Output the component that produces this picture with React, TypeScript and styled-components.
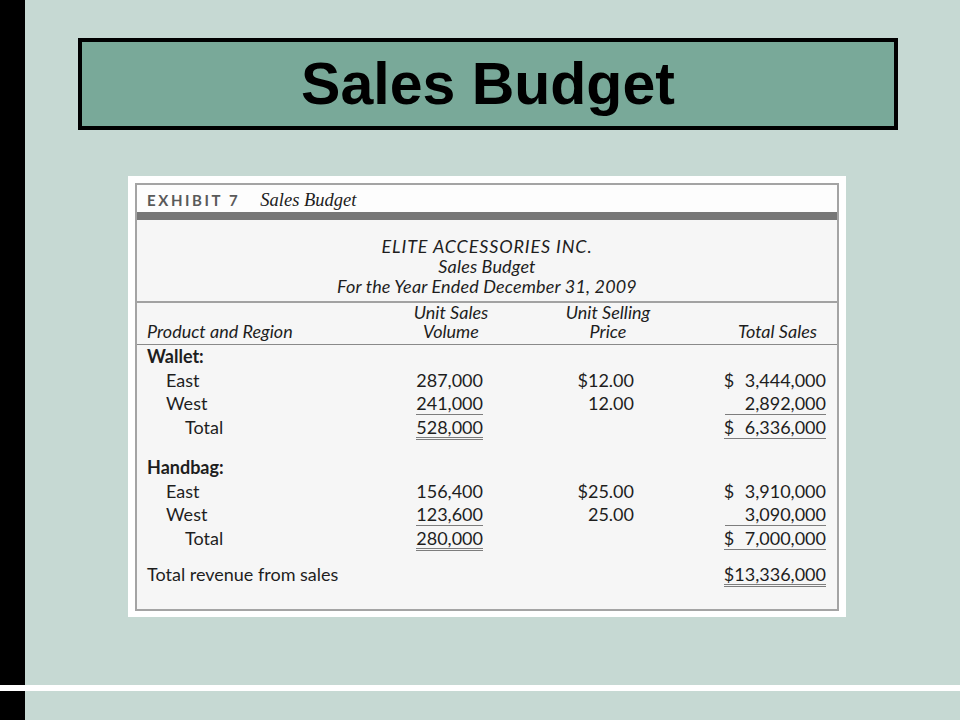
import styled, { createGlobalStyle } from 'styled-components';

const GlobalStyle = createGlobalStyle`
  html, body {
    margin: 0;
    padding: 0;
    background: #c6d9d3;
  }

  body {
    width: 960px;
    height: 720px;
    overflow: hidden;
  }
`;

type Rule = 'single' | 'double';

const ruleBorder = (rule?: Rule) => {
  if (rule === 'single') return 'border-bottom: 1px solid #7d7d7d; padding-bottom: 2px;';
  if (rule === 'double') return 'border-bottom: 3px double #7d7d7d; padding-bottom: 1px;';
  return 'padding-bottom: 3px;';
};

const S = {
  Page: styled.div`
    background: #c6d9d3;
    display: flex;
    flex-direction: column;
    height: 720px;
    width: 960px;
  `,

  Band: styled.div<{ $height: number }>`
    display: flex;
    height: ${({ $height }) => $height}px;
  `,

  Rail: styled.div`
    background: #000;
    flex: none;
    width: 25px;
  `,

  Divider: styled.div`
    background: #fff;
    height: 6px;
  `,

  Stage: styled.main`
    align-items: flex-start;
    display: flex;
    flex: 1;
    flex-direction: column;
    padding: 38px 0 0 53px;
  `,

  TitleBox: styled.header`
    align-items: center;
    background: #79a999;
    border: 4px solid #000;
    box-sizing: border-box;
    display: flex;
    height: 92px;
    justify-content: center;
    width: 820px;
  `,

  Title: styled.h1`
    color: #000;
    font: 700 59px/1 'Liberation Sans', Arial, sans-serif;
    margin: 0;
  `,

  Exhibit: styled.section`
    background: #fff;
    box-sizing: border-box;
    margin: 46px 0 0 50px;
    padding: 7px 7px 6px;
    width: 718px;
  `,

  Panel: styled.div`
    background: #f6f6f6;
    border: 2px solid #a4a4a4;
    color: #1e1e1e;
    font-family: Lato, 'Open Sans', sans-serif;
  `,

  ExhibitHead: styled.div`
    align-items: baseline;
    background: #fdfdfd;
    box-sizing: border-box;
    display: flex;
    gap: 20px;
    height: 27px;
    padding: 5px 0 0 10px;
  `,

  ExhibitTag: styled.span`
    color: #5a5a5a;
    font-size: 15px;
    font-weight: 700;
    letter-spacing: 2.6px;
    line-height: 20px;
  `,

  ExhibitName: styled.span`
    color: #1c1c1c;
    font: italic 18.5px/20px 'Liberation Serif', 'Times New Roman', serif;
  `,

  Bar: styled.div`
    background: #777;
    height: 8px;
  `,

  Heading: styled.div`
    border-bottom: 2px solid #a2a2a2;
    font-size: 18px;
    font-style: italic;
    line-height: 20px;
    padding: 16px 0 5px;
    text-align: center;
  `,

  HeadingLine: styled.p<{ $spacing: number }>`
    letter-spacing: ${({ $spacing }) => $spacing}px;
    margin: 0;
  `,

  Columns: styled.div`
    border-bottom: 1px solid #8a8a8a;
    padding: 0 11px 3px 10px;
  `,

  Rows: styled.div`
    padding: 0 11px 22px 10px;
  `,

  Grid: styled.div<{ $gap?: number; $lineHeight: number; $italic?: boolean }>`
    display: grid;
    font-size: 18px;
    font-style: ${({ $italic }) => ($italic ? 'italic' : 'normal')};
    grid-template-columns: 258px 92px 222px 107px;
    line-height: ${({ $lineHeight }) => $lineHeight}px;
    margin-top: ${({ $gap }) => $gap ?? 0}px;
  `,

  Label: styled.div<{ $level: number; $strong?: boolean }>`
    font-weight: ${({ $strong }) => ($strong ? 700 : 400)};
    padding-left: ${({ $level }) => $level * 19}px;
    white-space: nowrap;
  `,

  Cell: styled.div<{ $align: 'left' | 'center' | 'right'; $pad?: number }>`
    padding-right: ${({ $pad }) => $pad ?? 0}px;
    text-align: ${({ $align }) => $align};
    white-space: nowrap;
  `,

  Figure: styled.span<{ $rule?: Rule; $width: number }>`
    display: inline-block;
    line-height: 17px;
    min-width: ${({ $width }) => $width}px;
    text-align: right;
    ${({ $rule }) => ruleBorder($rule)}
  `,
};

type Line = {
  label: string;
  level: 0 | 1 | 2;
  strong?: boolean;
  gap?: number;
  volume?: string;
  volumeRule?: Rule;
  price?: string;
  total?: string;
  totalRule?: Rule;
};

const lines: Line[] = [
  { label: 'Wallet:', level: 0, strong: true },
  { label: 'East', level: 1, volume: '287,000', price: '$12.00', total: '$\u20073,444,000' },
  { label: 'West', level: 1, volume: '241,000', volumeRule: 'single', price: '12.00', total: '2,892,000', totalRule: 'single' },
  { label: 'Total', level: 2, volume: '528,000', volumeRule: 'double', total: '$\u20076,336,000', totalRule: 'single' },
  { label: 'Handbag:', level: 0, strong: true, gap: 16.5 },
  { label: 'East', level: 1, volume: '156,400', price: '$25.00', total: '$\u20073,910,000' },
  { label: 'West', level: 1, volume: '123,600', volumeRule: 'single', price: '25.00', total: '3,090,000', totalRule: 'single' },
  { label: 'Total', level: 2, volume: '280,000', volumeRule: 'double', total: '$\u20077,000,000', totalRule: 'single' },
  { label: 'Total revenue from sales', level: 0, gap: 12.5, total: '$13,336,000', totalRule: 'double' },
];

export default function App() {
  return (
    <>
      <GlobalStyle />
      <S.Page>
        <S.Band $height={685}>
          <S.Rail />
          <S.Stage>
            <S.TitleBox>
              <S.Title>Sales Budget</S.Title>
            </S.TitleBox>
            <S.Exhibit>
              <S.Panel>
                <S.ExhibitHead>
                  <S.ExhibitTag>EXHIBIT 7</S.ExhibitTag>
                  <S.ExhibitName>Sales Budget</S.ExhibitName>
                </S.ExhibitHead>
                <S.Bar />
                <S.Heading>
                  <S.HeadingLine $spacing={0.85}>ELITE ACCESSORIES INC.</S.HeadingLine>
                  <S.HeadingLine $spacing={0.15}>Sales Budget</S.HeadingLine>
                  <S.HeadingLine $spacing={0.15}>For the Year Ended December 31, 2009</S.HeadingLine>
                </S.Heading>
                <S.Columns>
                  <S.Grid $lineHeight={19} $italic>
                    <S.Label $level={0} />
                    <S.Cell $align="center">Unit Sales</S.Cell>
                    <S.Cell $align="center">Unit Selling</S.Cell>
                    <S.Cell $align="right" />
                    <S.Label $level={0}>Product and Region</S.Label>
                    <S.Cell $align="center">Volume</S.Cell>
                    <S.Cell $align="center">Price</S.Cell>
                    <S.Cell $align="right" $pad={9}>
                      Total Sales
                    </S.Cell>
                  </S.Grid>
                </S.Columns>
                <S.Rows>
                  {lines.map((line, i) => (
                    <S.Grid key={i} $lineHeight={23.5} $gap={line.gap}>
                      <S.Label $level={line.level} $strong={line.strong}>
                        {line.label}
                      </S.Label>
                      <S.Cell $align="right" $pad={14}>
                        {line.volume && (
                          <S.Figure $width={66} $rule={line.volumeRule}>
                            {line.volume}
                          </S.Figure>
                        )}
                      </S.Cell>
                      <S.Cell $align="right" $pad={85}>
                        {line.price}
                      </S.Cell>
                      <S.Cell $align="right">
                        {line.total && (
                          <S.Figure $width={101} $rule={line.totalRule}>
                            {line.total}
                          </S.Figure>
                        )}
                      </S.Cell>
                    </S.Grid>
                  ))}
                </S.Rows>
              </S.Panel>
            </S.Exhibit>
          </S.Stage>
        </S.Band>
        <S.Divider />
        <S.Band $height={29}>
          <S.Rail />
        </S.Band>
      </S.Page>
    </>
  );
}
